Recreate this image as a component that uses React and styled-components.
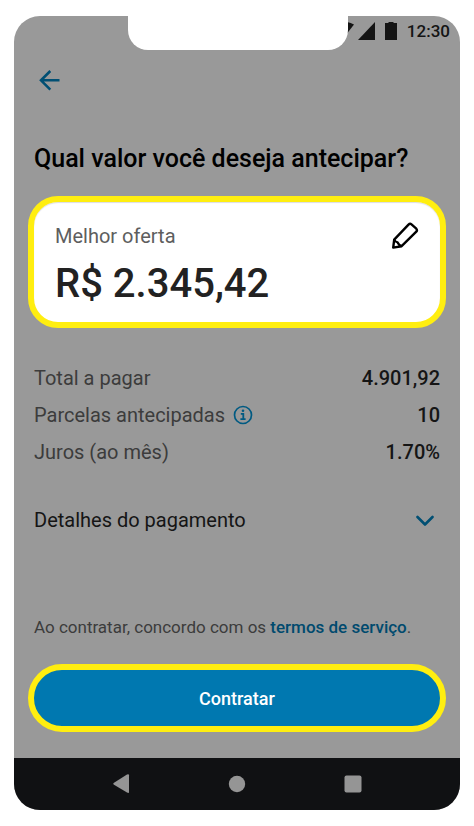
import React from 'react'
import styled, { createGlobalStyle } from 'styled-components';

const rows = [
    { label: 'Total a pagar', value: '4.901,92' },
    { label: 'Parcelas antecipadas', value: '10', info: true },
    { label: 'Juros (ao mês)', value: '1.70%' },
];

const StatusBar = () => {
  return (
    <Status>
        <svg width="24" height="18" viewBox="0 0 24 18" fill="currentColor">
            <path d="M12 18 0 2.500C7-1.500 17-1.500 24 2.500Z" />
        </svg>
        <svg width="17" height="18" viewBox="0 0 17 18" fill="currentColor">
            <path d="M17 0v18H0Z" />
        </svg>
        <svg className='battery' width="12" height="18" viewBox="0 0 12 18" fill="currentColor">
            <path d="M3.500 0h5v1H12v17H0V1h3.500Z" />
        </svg>
        <time>12:30</time>
    </Status>
  )
}

const App = () => {
  return (
    <>
        <GlobalStyle />
        <Phone>
            <Notch />
            <StatusBar />
            <Main>
                <BackButton type="button" aria-label="Voltar">
                    <svg width="22" height="22" viewBox="0 0 22 22" fill="none" stroke="currentColor" strokeWidth="2.600">
                        <path d="M20.500 11.300H2.500M11.300 2 2 11.300l9.300 9.300" />
                    </svg>
                </BackButton>
                <Title>Qual valor você deseja antecipar?</Title>
                <Offer>
                    <div>
                        <p className='label'>Melhor oferta</p>
                        <p className='price'>R$ 2.345,42</p>
                    </div>
                    <IconButton type="button" aria-label="Editar valor">
                        <svg width="28" height="28" viewBox="0 0 28 28" fill="none" stroke="currentColor" strokeWidth="2.400" strokeLinejoin="round">
                            <path d="M2.200 25.600 3.200 17.600 17.500 2.600Q19 1.200 20.500 2.400L25.300 6.700Q26.600 8.200 25.300 9.700L10.600 24.200Z" />
                            <path d="M3.200 17.600Q4.200 20 6.600 20.400 7.800 23 10.600 24.200" />
                        </svg>
                    </IconButton>
                </Offer>
                <Summary>
                    {rows.map((row) => (
                        <Row key={row.label}>
                            <dt>
                                {row.label}
                                {row.info && (
                                    <InfoButton type="button" aria-label="Mais informações">
                                        <svg width="20" height="20" viewBox="0 0 20 20" fill="none" stroke="currentColor">
                                            <circle cx="10" cy="10" r="8.500" strokeWidth="1.700" />
                                            <path d="M7.800 8.800h2.500v5.200M7.400 14.200h5.200" strokeWidth="1.800" />
                                            <circle cx="10" cy="5.800" r="1.300" fill="currentColor" stroke="none" />
                                        </svg>
                                    </InfoButton>
                                )}
                            </dt>
                            <dd>{row.value}</dd>
                        </Row>
                    ))}
                </Summary>
                <Details type="button">
                    Detalhes do pagamento
                    <svg width="18" height="14" viewBox="0 0 18 14" fill="none" stroke="currentColor" strokeWidth="2.600" strokeLinecap="round" strokeLinejoin="round">
                        <path d="M1.500 4 9 11.500 16.500 4" />
                    </svg>
                </Details>
                <Terms>
                    Ao contratar, concordo com os <a href="#termos">termos de serviço</a>.
                </Terms>
                <Submit type="button">Contratar</Submit>
            </Main>
            <NavBar>
                <NavButton type="button" aria-label="Voltar">
                    <svg width="18" height="20" viewBox="0 0 18 20" fill="currentColor">
                        <path d="M15 .500Q17-.300 17 1.200v17Q17 19.400 15 18.500L2 10.700Q.500 9.700 2 8.700Z" />
                    </svg>
                </NavButton>
                <NavButton type="button" aria-label="Início">
                    <svg width="18" height="18" viewBox="0 0 18 18" fill="currentColor">
                        <circle cx="9" cy="9" r="8.200" />
                    </svg>
                </NavButton>
                <NavButton type="button" aria-label="Recentes">
                    <svg width="18" height="18" viewBox="0 0 18 18" fill="currentColor">
                        <rect x=".500" y=".500" width="17" height="17" rx="2" />
                    </svg>
                </NavButton>
            </NavBar>
        </Phone>
    </>
  )
}

export default App;

const GlobalStyle = createGlobalStyle`
    * {
        box-sizing: border-box;
        margin: 0;
        padding: 0;
    }
    body {
        background: #fff;
        font-family: Roboto, "Liberation Sans", sans-serif;
    }
    button {
        border: 0;
        background: none;
        font-family: inherit;
        cursor: pointer;
    }
    svg {
        display: block;
        flex-shrink: 0;
    }
`;

const Phone = styled.div`
    position: relative;
    margin: 16px 14px;
    border-radius: 26px;
    overflow: hidden;
    background: #999;
`;

const Notch = styled.div`
    position: absolute;
    top: 0;
    left: 50%;
    width: 220px;
    height: 34px;
    margin-left: -109px;
    border-radius: 0 0 20px 20px;
    background: #fff;
`;

const Status = styled.div`
    display: flex;
    justify-content: flex-end;
    align-items: center;
    gap: 4px;
    height: 30px;
    padding-right: 10px;
    color: #141414;

    .battery {
        margin: 0 6px;
    }

    time {
        font-size: 17px;
        font-weight: 500;
    }
`;

const Main = styled.main`
    display: flex;
    flex-direction: column;
    padding: 12px 14px 26px;
`;

const BackButton = styled.button`
    align-self: flex-start;
    display: flex;
    justify-content: center;
    align-items: center;
    width: 44px;
    height: 44px;
    color: #004f73;
`;

const Title = styled.h1`
    margin: 43px 6px 23px;
    font-size: 25px;
    font-weight: 500;
    line-height: 28px;
    color: #000;
`;

const Offer = styled.section`
    display: flex;
    justify-content: space-between;
    align-items: flex-start;
    padding: 20px 21px 16px;
    border: 6px solid #ffee10;
    border-radius: 30px;
    background: #fff;
    box-shadow: inset 0 1px 1px #dcdce4;

    .label {
        font-size: 20px;
        line-height: 28px;
        color: #5e5e5e;
    }

    .price {
        margin-top: 12px;
        font-size: 40px;
        font-weight: 500;
        line-height: 44px;
        color: #222;
    }
`;

const IconButton = styled.button`
    color: #000;
`;

const InfoButton = styled.button`
    color: #005a82;
`;

const Summary = styled.dl`
    margin: 31px 6px 0;
`;

const Row = styled.div`
    display: flex;
    justify-content: space-between;
    align-items: center;
    height: 37px;
    font-size: 20px;

    dt {
        display: flex;
        align-items: center;
        gap: 8px;
        color: #3c3c3c;
    }

    dd {
        font-weight: 500;
        color: #151515;
    }
`;

const Details = styled.button`
    display: flex;
    justify-content: space-between;
    align-items: center;
    height: 44px;
    margin: 28px 6px 0;
    padding-right: 6px;
    font-size: 20px;
    color: #151515;

    svg {
        color: #004f73;
    }
`;

const Terms = styled.p`
    margin: 73px 6px 25px;
    font-size: 17px;
    line-height: 24px;
    color: #3c3c3c;

    a {
        font-weight: 500;
        color: #004a6e;
        text-decoration: none;
    }
`;

const Submit = styled.button`
    height: 68px;
    border: 6px solid #ffee10;
    border-radius: 34px;
    background: #0078b0;
    font-size: 18px;
    font-weight: 500;
    color: #fff;
`;

const NavBar = styled.nav`
    display: flex;
    justify-content: space-between;
    align-items: center;
    height: 52px;
    padding: 0 98px;
    background: #101113;
`;

const NavButton = styled.button`
    color: #959595;
`;
